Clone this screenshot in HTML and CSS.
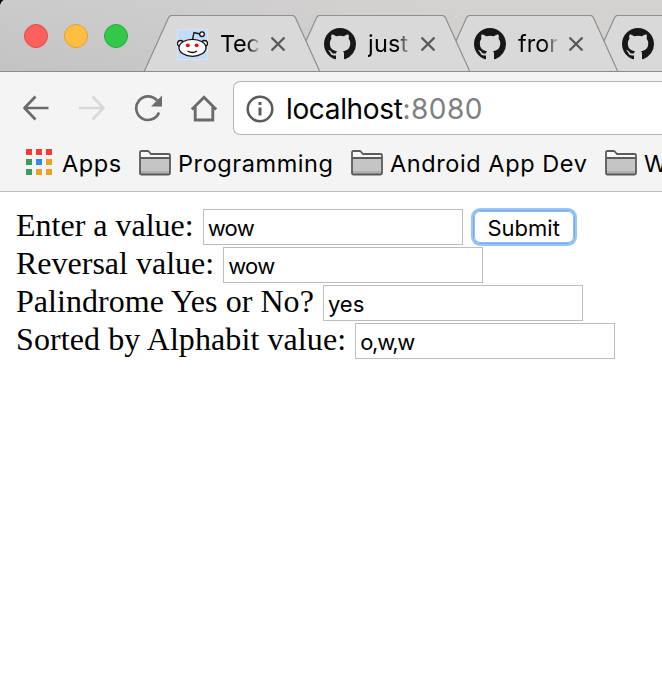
FILE: index.html
```html
<!DOCTYPE html>
<html lang="en">
<head>
<meta charset="utf-8">
<title>localhost:8080</title>
<link rel="stylesheet" href="styles.css">
</head>
<body>
<svg class="defs" aria-hidden="true">
  <symbol id="github" viewBox="0 0 16 16"><path fill-rule="evenodd" d="M8 0C3.58 0 0 3.58 0 8c0 3.54 2.29 6.53 5.47 7.59.4.07.55-.17.55-.38 0-.19-.01-.82-.01-1.49-2.01.37-2.53-.49-2.69-.94-.09-.23-.48-.94-.82-1.13-.28-.15-.68-.52-.01-.53.63-.01 1.08.58 1.23.82.72 1.21 1.87.87 2.33.66.07-.52.28-.87.51-1.07-1.78-.2-3.64-.89-3.64-3.95 0-.87.31-1.59.82-2.15-.08-.2-.36-1.02.08-2.12 0 0 .67-.21 2.2.82.64-.18 1.32-.27 2-.27s1.36.09 2 .27c1.53-1.04 2.2-.82 2.2-.82.44 1.1.16 1.92.08 2.12.51.56.82 1.27.82 2.15 0 3.07-1.87 3.75-3.65 3.95.29.25.54.73.54 1.48 0 1.07-.01 1.93-.01 2.2 0 .21.15.46.55.38A8.01 8.01 0 0 0 16 8c0-4.42-3.58-8-8-8z"/></symbol>
  <symbol id="close" viewBox="0 0 16 16"><path d="M1.500 1.500l13 13M14.500 1.500l-13 13" fill="none" stroke="#58585a" stroke-width="2.300"/></symbol>
  <symbol id="tab-shape" viewBox="0 0 178 57"><path class="tab-line" d="M0 57L24.500 2.800Q25.500 .5 28 .5H150Q152.500 .5 153.500 2.800L178 57"/></symbol>
  <symbol id="folder" viewBox="0 0 32 26">
    <path d="M1 24V2.500Q1 1 2.500 1H9L12.500 4H29.500Q31 4 31 5.500V24Z" fill="#f8f8f8"/>
    <path d="M1 8.500H31V24H1Z" fill="#c5c5c5"/><path d="M1 21H31V24H1Z" fill="#b0b0b0"/>
    <path d="M1 8H31M1 23V2.500Q1 1 2.500 1H8.500Q9.500 1 10 1.800L12 4H29.500Q31 4 31 5.500V23Q31 24.500 29.500 24.500H2.500Q1 24.500 1 23Z" fill="none" stroke="#5c5a5b" stroke-width="1.800"/>
  </symbol>
</svg>
<header class="tabstrip">
  <div class="lights"><i class="light red"></i><i class="light yellow"></i><i class="light green"></i></div>
  <div class="tabs">
    <div class="tab first">
      <svg class="shape" viewBox="0 0 176 57"><path class="tab-line" d="M0 57L24.500 2.800Q25.500 .5 28 .5H148Q150.500 .5 151.500 2.800L176 57"/></svg>
      <svg class="reddit" viewBox="0 0 31 31"><rect width="31" height="31" fill="#c4dcf6" stroke="#e1edf9"/><g fill="#fff" stroke="#111" stroke-width="1.300"><circle cx="3.500" cy="14.500" r="3"/><circle cx="27.500" cy="14.500" r="3"/><path d="M15.500 10.500L17 3.500L23 5" fill="none"/><circle cx="25" cy="5.200" r="2.300"/><ellipse cx="15.500" cy="18.800" rx="13.500" ry="8.500"/><path d="M10.500 22Q15.500 25 20 22" fill="none"/></g><circle cx="10.800" cy="16.300" r="1.900" fill="#f00"/><circle cx="19.700" cy="16.300" r="1.900" fill="#f00"/></svg>
      <span class="title">Tec</span><svg class="close"><use href="#close"/></svg>
    </div>
    <div class="tab second">
      <svg class="shape"><use href="#tab-shape"/></svg>
      <svg class="github"><use href="#github"/></svg><span class="title">just</span><svg class="close"><use href="#close"/></svg>
    </div>
    <div class="tab third">
      <svg class="shape" viewBox="0 0 176 57"><path class="tab-line" d="M0 57L24.500 2.800Q25.500 .5 28 .5H148Q150.500 .5 151.500 2.800L176 57"/></svg>
      <svg class="github"><use href="#github"/></svg><span class="title">fror</span><svg class="close"><use href="#close"/></svg>
    </div>
    <div class="tab fourth">
      <svg class="shape" viewBox="0 0 72 57"><path class="tab-line" d="M0 57L24.500 2.800Q25.500 .5 28 .5H80V57"/></svg>
      <svg class="github"><use href="#github"/></svg>
    </div>
  </div>
  <svg class="corner" viewBox="0 0 4 5"><path d="M0 0H3.500Q1 1.500 0 5Z"/></svg>
</header>
<nav class="toolbar">
  <div class="navrow">
    <svg class="nav" viewBox="0 0 28 28"><path d="M13.500 2.500L2.500 14L13.500 25.500M2.500 14H26.500" fill="none" stroke="#6b6b6b" stroke-width="2.700" stroke-linejoin="round"/></svg>
    <svg class="nav" viewBox="0 0 28 28"><path d="M14.500 2.500L25.500 14L14.500 25.500M25.500 14H1" fill="none" stroke="#d8d8d8" stroke-width="2.700" stroke-linejoin="round"/></svg>
    <svg class="nav" viewBox="0 0 28 28"><path d="M25 18.500A11.800 11.800 0 1 1 23 6.500" fill="none" stroke="#6b6b6b" stroke-width="2.700"/><path d="M28 1.500V12.500H17Z" fill="#6b6b6b"/></svg>
    <svg class="nav" viewBox="0 0 28 28"><path d="M1.800 15.500L14 3.200L26.200 15.500M5.200 13V26H22.800V13" fill="none" stroke="#6b6b6b" stroke-width="2.900"/></svg>
    <div class="address">
      <svg class="info" viewBox="0 0 28 28"><circle cx="14" cy="14" r="12.300" fill="none" stroke="#5b5b5b" stroke-width="2.500"/><path d="M12.500 7H15.500V10H12.500ZM12.500 12.500H15.500V20.500H12.500Z" fill="#5b5b5b"/></svg>
      <span class="url">localhost<span class="port">:8080</span></span>
    </div>
  </div>
  <div class="bookmarks">
    <div class="appgrid"><i class="r"></i><i class="r"></i><i class="r"></i><i class="g"></i><i class="b"></i><i class="y"></i><i class="g"></i><i class="y"></i><i class="y"></i></div>
    <span class="bm apps">Apps</span>
    <svg class="folder"><use href="#folder"/></svg><span class="bm prog">Programming</span>
    <svg class="folder"><use href="#folder"/></svg><span class="bm dev">Android App Dev</span>
    <svg class="folder"><use href="#folder"/></svg><span class="bm last">W</span>
  </div>
</nav>
<main class="page">
  <div class="row"><label for="a">Enter a value:</label><input id="a" class="wow" value="wow"><button>Submit</button></div>
  <div class="row"><label for="b">Reversal value:</label><input id="b" class="wow" value="wow"></div>
  <div class="row palindrome"><label for="c">Palindrome Yes or No?</label><input id="c" value="yes"></div>
  <div class="row alphabet"><label for="d">Sorted by Alphabit value:</label><input id="d" class="sorted" value="o,w,w"></div>
</main>
</body>
</html>
```
FILE: styles.css
```css
* { box-sizing: border-box; }
body { margin: 0; width: 662px; height: 696px; overflow: hidden; background: #fff; color: #000; font-family: Inter, "Liberation Sans", sans-serif; }
svg { display: block; flex: none; }
.defs { position: absolute; width: 0; height: 0; }

.tabstrip { position: relative; display: flex; height: 72px; overflow: hidden; border-bottom: 1px solid #8b8b8b; background: linear-gradient(12deg, #c3c3c3, #cbcbcb 35%, #d4d2d1 75%); }
.corner { position: absolute; left: 0; top: 0; width: 4px; height: 5px; }
.lights { display: flex; flex: none; gap: 16px; width: 144px; padding: 24px 0 0 24px; }
.light { width: 24px; height: 24px; border-radius: 50%; border: 1px solid; }
.red { background: #fe605b; border-color: #e5484a; }
.yellow { background: #ffbe40; border-color: #e1a03a; }
.green { background: #34c84a; border-color: #20ae34; }
.tabs { display: flex; flex: none; padding-top: 15px; }
.tab { position: relative; display: flex; flex: none; width: 178px; height: 57px; margin-left: -28px; padding-left: 32px; }
.tab.first { width: 176px; margin-left: 0; padding-left: 33px; z-index: 4; }
.second { z-index: 3; }
.tab.third { width: 176px; z-index: 2; }
.tab.fourth { width: 72px; overflow: hidden; z-index: 1; }
.shape { position: absolute; left: 0; top: 0; width: 100%; height: 57px; z-index: -1; }
.tab-line { fill: #d9d9d9; stroke: #8f8f8d; stroke-width: 1.2; }
.reddit { width: 31px; height: 31px; margin-top: 14px; }
.github { width: 32px; height: 32px; margin-top: 13px; fill: #181617; }
.title { flex: none; width: 40px; height: 34px; margin: 14px 0 0 12px; overflow: hidden; white-space: nowrap; font-size: 23.5px; line-height: 30px; letter-spacing: -0.3px; -webkit-mask-image: linear-gradient(90deg, #000 65%, transparent); mask-image: linear-gradient(90deg, #000 65%, transparent); }
.first .title { width: 41px; }
.second .title { width: 44px; letter-spacing: 0.2px; }
.third .title { width: 41px; letter-spacing: 0; }
.close { width: 16px; height: 16px; margin: 21px 0 0 9px; }
.second .close { margin-left: 8px; }

.toolbar { height: 120px; padding-top: 9px; background: #f4f4f4; border-bottom: 1px solid #bdbdbd; }
.navrow { display: flex; height: 54px; padding-left: 22px; align-items: center; gap: 28px; }
.nav { width: 28px; height: 28px; }
.address { display: flex; flex: none; align-items: center; width: 429px; height: 54px; margin-left: -13px; padding-left: 12px; border: 1px solid #b3b3b3; border-right: 0; border-radius: 7px 0 0 7px; background: #fff; }
.info { width: 28px; height: 28px; margin-top: 1px; }
.url { margin: 2px 0 0 12px; font-size: 28px; line-height: 34px; letter-spacing: -0.35px; }
.port { color: #808080; letter-spacing: 0.45px; }
.bookmarks { display: flex; height: 56px; padding-left: 26px; align-items: center; white-space: nowrap; font-size: 23.5px; line-height: 30px; }
.appgrid { display: grid; flex: none; grid-template-columns: repeat(3, 6px); gap: 4px; margin-top: -3px; }
.appgrid i { height: 6px; }
.r { background: #f43b3b; }
.g { background: #3a9e5b; }
.b { background: #2b8cf5; }
.y { background: #f0a125; }
.bm { flex: none; margin-top: 2px; letter-spacing: 0.58px; }
.apps { width: 77px; margin-left: 10px; letter-spacing: 0.55px; }
.prog { width: 173px; }
.dev { width: 215px; }
.last { width: 18px; overflow: hidden; }
.folder { width: 32px; height: 26px; margin: 0 7px 0 0; }

.page { padding: 16px 0 0 16px; }
.row { display: flex; height: 38px; align-items: center; font: 32px/36px "Liberation Serif", serif; white-space: nowrap; }
.row label { margin: -4px 9px 0 0; }
.palindrome label { letter-spacing: 0.05px; }
.alphabet label { letter-spacing: 0.09px; }
input { width: 260px; height: 36px; padding: 2px 0 0 4px; border: 1px solid #bdbdbd; border-radius: 0; outline: 0; background: #fff; color: #000; font: 22px Inter, sans-serif; }
.wow { letter-spacing: -0.7px; }
.sorted { letter-spacing: -1.3px; }
button { width: 102px; height: 34px; margin-left: 10px; padding: 2px 0 0; border: 1px solid #79aee9; border-radius: 7px; background: #fff; color: #000; font: 22px Inter, sans-serif; box-shadow: 0 0 0 2px #98c6fa, inset 0 0 0 1px #8fbef3; }
```
